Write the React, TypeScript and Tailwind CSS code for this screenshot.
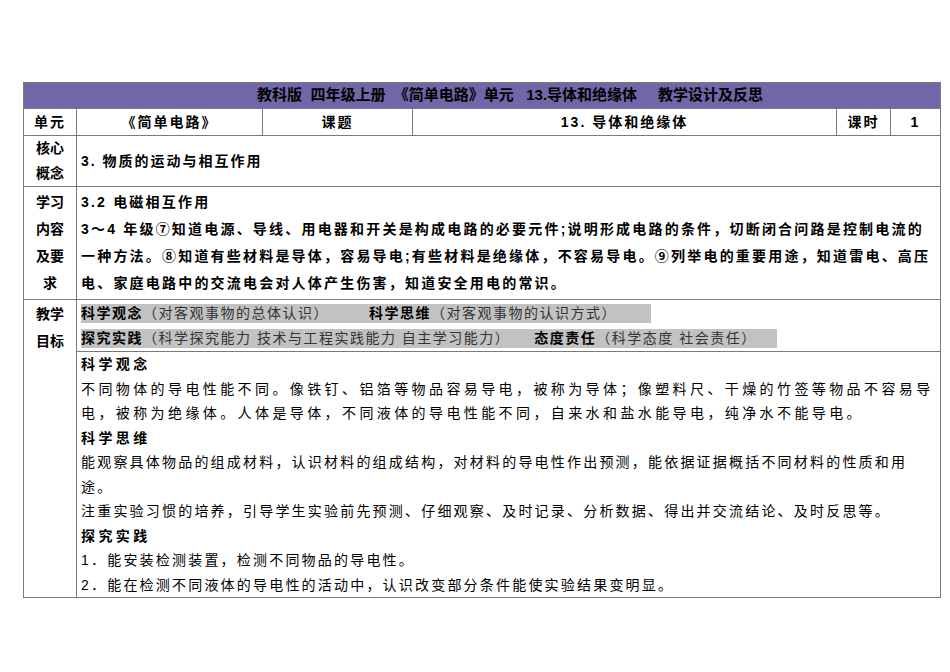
const font = {
  fontFamily: '"Liberation Sans", "Noto Sans CJK SC", sans-serif',
};

const cell = "border border-[#7a7a7a] px-[4px] align-middle";

export default function App() {
  return (
    <div className="w-[950px] h-[672px] bg-white pt-[82px] pl-[23px] text-[14px] text-black" style={font}>
      <table className="border-collapse w-[917px] table-fixed">
        <colgroup>
          <col className="w-[53px]" />
          <col className="w-[186px]" />
          <col className="w-[150px]" />
          <col className="w-[424px]" />
          <col className="w-[54px]" />
          <col className="w-[50px]" />
        </colgroup>
        <tbody>
          <tr className="h-[26px]">
            <td colSpan={6} className={`${cell} bg-[#6f67a8] text-center font-bold text-[15px] pl-[60px]`}>
              教科版&nbsp;&nbsp;四年级上册&nbsp;&nbsp;《简单电路》单元&nbsp;&nbsp;&nbsp;13.导体和绝缘体&nbsp;&nbsp;&nbsp;&nbsp;&nbsp;教学设计及反思
            </td>
          </tr>
          <tr className="h-[27px] font-bold tracking-[2px]">
            <td className={`${cell} text-center`}>单元</td>
            <td className={`${cell} text-center`}>《简单电路》</td>
            <td className={`${cell} text-center`}>课题</td>
            <td className={`${cell} text-center`}>13. 导体和绝缘体</td>
            <td className={`${cell} text-center`}>课时</td>
            <td className={`${cell} text-center`}>1</td>
          </tr>
          <tr className="h-[50px]">
            <td className={`${cell} text-center font-bold leading-[25px]`}>核心<br />概念</td>
            <td colSpan={5} className={`${cell} font-bold tracking-[2px]`}>3. 物质的运动与相互作用</td>
          </tr>
          <tr className="h-[111px]">
            <td className={`${cell} text-center font-bold leading-[27px] py-[2px]`}>学习<br />内容<br />及要<br />求</td>
            <td colSpan={5} className={`${cell} font-bold leading-[27px] py-[2px] tracking-[2.2px]`}>
              3.2 电磁相互作用<br />
              3～4 年级⑦知道电源、导线、用电器和开关是构成电路的必要元件;说明形成电路的条件，切断闭合问路是控制电流的一种方法。⑧知道有些材料是导体，容易导电;有些材料是绝缘体，不容易导电。⑨列举电的重要用途，知道雷电、高压电、家庭电路中的交流电会对人体产生伤害，知道安全用电的常识。
            </td>
          </tr>
          <tr className="h-[52px]">
            <td rowSpan={2} className={`${cell} text-center font-bold leading-[27px] align-top pt-[1px]`}>教学<br />目标</td>
            <td colSpan={5} className={`${cell} py-[2px] tracking-[1.5px]`}>
              <div className="flex flex-col gap-[6px]">
                <div className="w-[570px] bg-[#c2c2c2] h-[19px] leading-[19px] flex">
                  <b>科学观念</b><span className="text-[#333]">（对客观事物的总体认识）</span>
                  <b className="ml-[40px]">科学思维</b><span className="text-[#333]">（对客观事物的认识方式）</span>
                </div>
                <div className="w-[696px] bg-[#c2c2c2] h-[19px] leading-[19px] flex">
                  <b>探究实践</b><span className="text-[#333]">（科学探究能力 技术与工程实践能力 自主学习能力）</span>
                  <b className="ml-[24px]">态度责任</b><span className="text-[#333]">（科学态度 社会责任）</span>
                </div>
              </div>
            </td>
          </tr>
          <tr className="h-[242px]">
            <td colSpan={5} className={`${cell} align-top leading-[24.5px] pt-[0px] tracking-[3.4px]`}>
              <b>科学观念</b><br />
              不同物体的导电性能不同。像铁钉、铝箔等物品容易导电，被称为导体；像塑料尺、干燥的竹签等物品不容易导电，被称为绝缘体。人体是导体，不同液体的导电性能不同，自来水和盐水能导电，纯净水不能导电。<br />
              <b>科学思维</b><br />
              <span className="tracking-[2.2px]">能观察具体物品的组成材料，认识材料的组成结构，对材料的导电性作出预测，能依据证据概括不同材料的性质和用途。</span><br />
              <span className="tracking-[2.2px]">注重实验习惯的培养，引导学生实验前先预测、仔细观察、及时记录、分析数据、得出并交流结论、及时反思等。</span><br />
              <b>探究实践</b><br />
              <span className="tracking-[2.2px]">1．能安装检测装置，检测不同物品的导电性。</span><br />
              <span className="tracking-[2.2px]">2．能在检测不同液体的导电性的活动中，认识改变部分条件能使实验结果变明显。</span>
            </td>
          </tr>
        </tbody>
      </table>
    </div>
  );
}
